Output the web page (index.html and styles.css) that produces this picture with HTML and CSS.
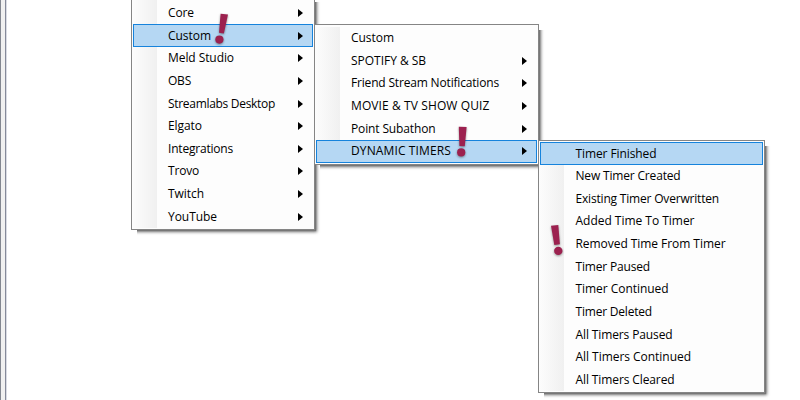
FILE: index.html
```
<!DOCTYPE html>
<html lang="en">
<head>
<meta charset="utf-8">
<title>Trigger menu</title>
<link rel="stylesheet" href="styles.css">
</head>
<body>
<div class="splitter"></div>
<ul class="menu menu-main">
<li class="item sub"><span data-width="26">Core</span></li>
<li class="item sub active"><span data-width="43">Custom</span></li>
<li class="item sub"><span data-width="66">Meld Studio</span></li>
<li class="item sub"><span data-width="23">OBS</span></li>
<li class="item sub"><span data-width="107">Streamlabs Desktop</span></li>
<li class="item sub"><span data-width="34">Elgato</span></li>
<li class="item sub"><span data-width="65">Integrations</span></li>
<li class="item sub"><span data-width="31">Trovo</span></li>
<li class="item sub"><span data-width="36">Twitch</span></li>
<li class="item sub"><span data-width="49">YouTube</span></li>
</ul>
<ul class="menu menu-custom">
<li class="item"><span data-width="43">Custom</span></li>
<li class="item sub"><span data-width="75">SPOTIFY &amp; SB</span></li>
<li class="item sub"><span data-width="148">Friend Stream Notifications</span></li>
<li class="item sub"><span data-width="138.5">MOVIE &amp; TV SHOW QUIZ</span></li>
<li class="item sub"><span data-width="84.5">Point Subathon</span></li>
<li class="item sub active"><span data-width="100">DYNAMIC TIMERS</span></li>
</ul>
<ul class="menu menu-timers">
<li class="item active"><span data-width="81">Timer Finished</span></li>
<li class="item"><span data-width="105">New Timer Created</span></li>
<li class="item"><span data-width="143.5">Existing Timer Overwritten</span></li>
<li class="item"><span data-width="119">Added Time To Timer</span></li>
<li class="item"><span data-width="150">Removed Time From Timer</span></li>
<li class="item"><span data-width="74.5">Timer Paused</span></li>
<li class="item"><span data-width="93">Timer Continued</span></li>
<li class="item"><span data-width="76.5">Timer Deleted</span></li>
<li class="item"><span data-width="97">All Timers Paused</span></li>
<li class="item"><span data-width="115.5">All Timers Continued</span></li>
<li class="item"><span data-width="99">All Timers Cleared</span></li>
</ul>
<svg class="marks" viewBox="0 0 800 400">
<g><path d="M220.6 13.7l7.4.9-4.1 18.9-4.9-.8z"/><circle cx="219.4" cy="39.6" r="4.1"/></g>
<g><path d="M458.8 126.7l7.8.3-1.8 19.2-5.4-.2z"/><circle cx="461.2" cy="152.4" r="4.1"/></g>
<g><path d="M551 225.7l7.3-.8 1.6 19.4-5.6.6z"/><circle cx="558.3" cy="250.9" r="4.2"/></g>
</svg>
<script src="script.js"></script>
</body>
</html>
```
FILE: styles.css
```
body {
  margin: 0;
  width: 800px;
  height: 400px;
  overflow: hidden;
  background: #fff;
  font-family: "Open Sans", "Noto Sans", sans-serif;
  font-size: 12px;
  color: #000;
}

.splitter {
  box-sizing: border-box;
  width: 7px;
  height: 400px;
  background: #f0f0f0;
  border-left: 1px solid #828790;
  border-right: 1px solid #d9dbe3;
  box-shadow: inset -1px 0 #858a99;
}

.menu {
  position: absolute;
  box-sizing: border-box;
  margin: 0;
  padding: 1px;
  list-style: none;
  border: 1px solid #858585;
  background: linear-gradient(90deg, #fcfcfc, #f0f0f0) 1px 2px / 24px calc(100% - 3px) no-repeat, #fdfdfd;
  box-shadow: 1px 1px 1px #777, 2px 2px 3px rgba(0, 0, 0, .55);
}

.menu-main {
  left: 131px;
  top: -4px;
  width: 184px;
  height: 234px;
  padding-top: 4.8px;
}

.menu-custom {
  left: 314px;
  top: 24px;
  width: 225px;
  height: 141px;
  padding-top: 1.8px;
}

.menu-timers {
  left: 538px;
  top: 140px;
  width: 227px;
  height: 253px;
  padding-top: 1.2px;
}

.menu-main,
.menu-custom,
.menu-timers {
  clip-path: polygon(0 0, 100% 0, 100% 6px, calc(100% + 6px) 6px, calc(100% + 6px) calc(100% + 6px), 6px calc(100% + 6px), 6px 100%, 0 100%);
}

.item {
  display: flex;
  align-items: center;
  justify-content: space-between;
  box-sizing: border-box;
  height: 22.63px;
  padding: 0 10px 0 35px;
  line-height: 20px;
  white-space: nowrap;
}

.active {
  background: #b5d7f3;
  border: 1px solid #1683dc;
  padding: 0 9px 0 34px;
}

.menu-timers .item {
  padding-left: 35.5px;
}

.menu-timers .active {
  padding-left: 34.5px;
}

.sub::after {
  content: "";
  border-left: 5px solid #000;
  border-top: 4px solid transparent;
  border-bottom: 4px solid transparent;
}

.marks {
  position: absolute;
  left: 0;
  top: 0;
  width: 800px;
  height: 400px;
  fill: #9c214f;
  filter: drop-shadow(0 1px 1px rgba(0, 0, 0, .4));
}
```
FILE: script.js
```
// Spread each label to its menu text width.
document.querySelectorAll("[data-width]").forEach(function (label) {
  var gap = Number(label.dataset.width) - label.getBoundingClientRect().width;
  label.style.letterSpacing = gap / label.textContent.length + "px";
});
```
